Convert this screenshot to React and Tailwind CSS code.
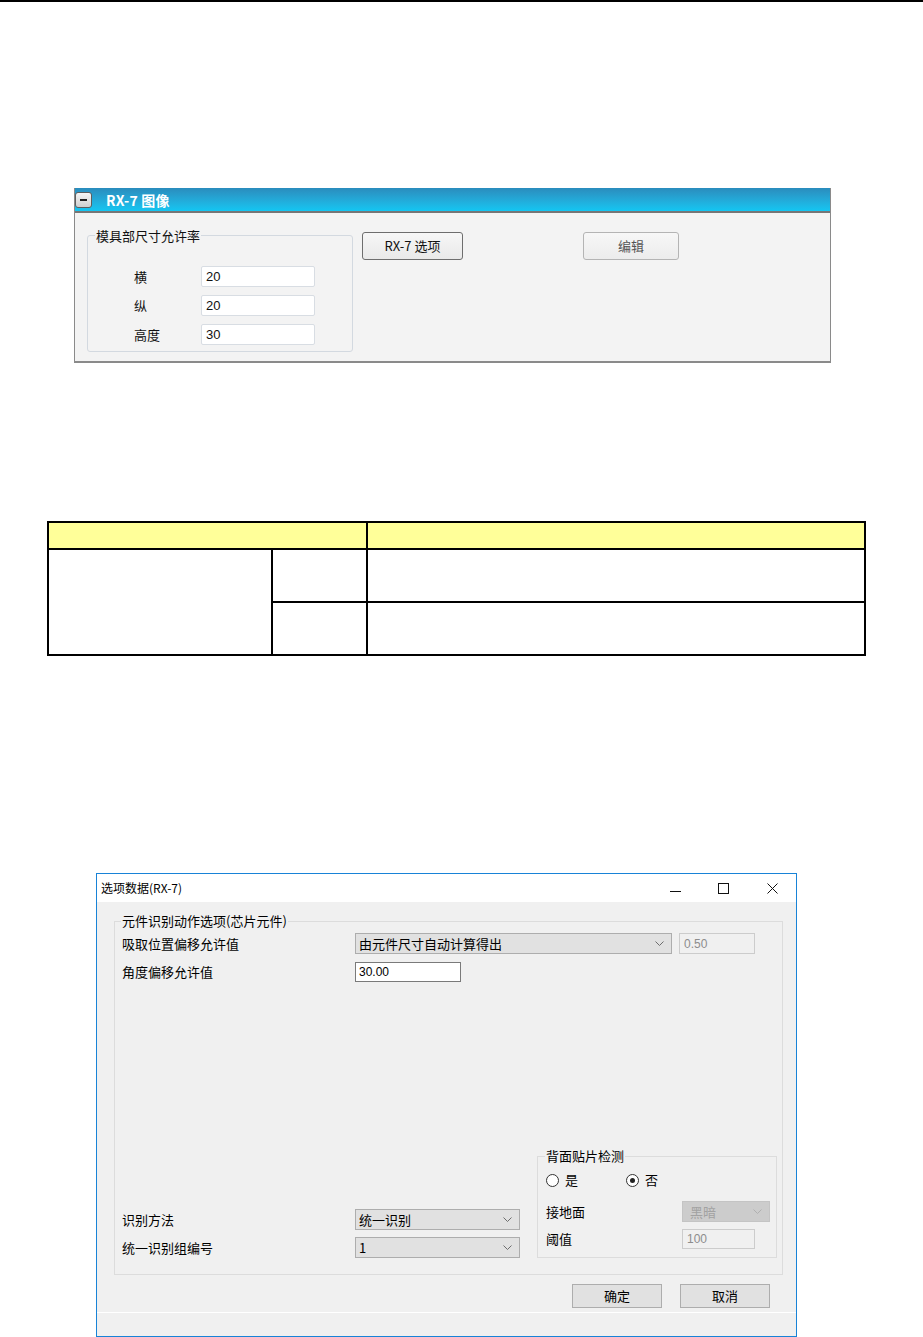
import React from "react";

// Page: a document sheet with two screenshots of RX-7 settings and an empty table.

function Chevron({ color = "#6d6d6d" }) {
  return (
    <svg width="9" height="5" viewBox="0 0 9 5" className="shrink-0">
      <path d="M0.5 0.5 L4.5 4.5 L8.5 0.5" stroke={color} fill="none" strokeWidth="1" />
    </svg>
  );
}

function ImagePanel() {
  return (
    <div className="ml-[74px] mt-[186px] w-[757px] h-[175px] border-x border-b-2 border-[#8a8a8a] bg-[#f3f3f3] flex flex-col">
      <div className="h-[25px] shrink-0 bg-linear-to-b from-[#2a8cbd] to-[#12c6f2] border-b-2 border-[#767676] flex items-center">
        <div className="w-[17px] h-[16px] rounded-[3px] border border-[#5e5e5e] bg-linear-to-b from-[#f6f6f6] to-[#cfcfcf] flex items-center justify-center">
          <div className="w-[7px] h-[2px] bg-[#222]" />
        </div>
        <span className="ml-[14px] text-[14px] leading-[18px] font-bold text-white tracking-[0.2px]">RX-7 图像</span>
      </div>
      <div className="flex items-start pl-[12px] pt-[14px]">
        <fieldset className="w-[266px] h-[125px] border border-[#d3d9e0] rounded-[3px] px-0">
          <legend className="ml-[7px] px-[1px] text-[13px] leading-[17px] text-[#111]">模具部尺寸允许率</legend>
          <div className="mt-[22px] ml-[46px] grid grid-cols-[67px_114px] gap-y-2 items-center">
            {[
              ["横", "20"],
              ["纵", "20"],
              ["高度", "30"],
            ].map(([label, value]) => (
              <React.Fragment key={label}>
                <span className="text-[13px] leading-[21px] text-[#111]">{label}</span>
                <div className="h-[21px] bg-white border border-[#d8dde3] rounded-[2px] pl-[4px] flex items-center text-[13px] font-['Liberation_Sans',sans-serif] text-[#111]">
                  {value}
                </div>
              </React.Fragment>
            ))}
          </div>
        </fieldset>
        <button className="ml-[9px] mt-[5px] w-[101px] h-[28px] rounded-[3px] border border-[#6e6e6e] bg-linear-to-b from-[#f7f7f7] to-[#e9e9e9] text-[13px] text-[#111] flex items-center justify-center">
          RX-7 选项
        </button>
        <button className="ml-[120px] mt-[5px] w-[96px] h-[28px] rounded-[3px] border border-[#b4b4b4] bg-linear-to-b from-[#f7f7f7] to-[#ececec] text-[13px] text-[#555] flex items-center justify-center">
          编辑
        </button>
      </div>
    </div>
  );
}

function EmptyTable() {
  return (
    <table className="ml-[47px] mt-[158px] w-[819px] border-collapse border-2 border-black table-fixed">
      <colgroup>
        <col className="w-[224px]" />
        <col className="w-[95px]" />
        <col />
      </colgroup>
      <thead>
        <tr className="h-[27px] bg-[#ffff99]">
          <th colSpan={2} className="border-2 border-black" />
          <th className="border-2 border-black" />
        </tr>
      </thead>
      <tbody>
        <tr className="h-[53px]">
          <td rowSpan={2} className="border-2 border-black" />
          <td className="border-2 border-black" />
          <td className="border-y-2 border-l border-black" />
        </tr>
        <tr className="h-[53px]">
          <td className="border-2 border-black" />
          <td className="border-y-2 border-l border-black" />
        </tr>
      </tbody>
    </table>
  );
}

function WinSelect({ value, width, disabled }) {
  return (
    <div
      className={
        disabled
          ? "h-[21px] bg-[#cccccc] border border-[#c4c4c4] pl-[7px] pr-[7px] flex items-center justify-between text-[13px] text-[#a2a2a2]"
          : "h-[21px] bg-[#e1e1e1] border border-[#adadad] pl-[3px] pr-[7px] flex items-center justify-between text-[13px] text-black"
      }
      style={{ width }}
    >
      <span className="leading-[19px]">{value}</span>
      <Chevron color={disabled ? "#b0b0b0" : "#6d6d6d"} />
    </div>
  );
}

function Radio({ checked, label }) {
  return (
    <div className="flex items-center">
      <div className="w-[13px] h-[13px] rounded-full border border-[#333] bg-white flex items-center justify-center">
        {checked && <div className="w-[5px] h-[5px] rounded-full bg-[#222]" />}
      </div>
      <span className="ml-[6px] text-[13px] leading-[18px]">{label}</span>
    </div>
  );
}

function OptionDialog() {
  return (
    <div className="ml-[96px] mt-[217px] w-[701px] border border-[#1883d7] bg-[#f0f0f0] flex flex-col text-black">
      <div className="h-[28px] bg-white flex items-center">
        <span className="ml-[4px] text-[12px] leading-[16px]">选项数据(RX-7)</span>
        <div className="ml-auto flex h-full">
          <div className="w-[46px] flex items-center justify-center">
            <svg width="11" height="11" viewBox="0 0 11 11">
              <path d="M0 8.5 H11" stroke="#111" strokeWidth="1" />
            </svg>
          </div>
          <div className="w-[50px] flex items-center justify-center">
            <svg width="11" height="11" viewBox="0 0 11 11">
              <rect x="0.5" y="0.5" width="10" height="10" stroke="#111" fill="none" strokeWidth="1" />
            </svg>
          </div>
          <div className="w-[48px] flex items-center justify-center">
            <svg width="11" height="11" viewBox="0 0 11 11">
              <path d="M0.5 0.5 L10.5 10.5 M10.5 0.5 L0.5 10.5" stroke="#111" strokeWidth="1" fill="none" />
            </svg>
          </div>
        </div>
      </div>

      <div className="h-[434px] flex flex-col">
        <div className="pt-[11px] pl-[17px] pr-[13px]">
          <fieldset className="h-[362px] border border-[#dcdcdc] px-0 flex flex-col">
            <legend className="ml-[6px] px-[1px] text-[13px] leading-[16px]">元件识别动作选项(芯片元件)</legend>
            <div className="flex flex-col h-full">
              <div className="mt-[4px] pl-[7px] flex items-center">
                <span className="w-[233px] text-[13px] leading-[21px]">吸取位置偏移允许值</span>
                <WinSelect value="由元件尺寸自动计算得出" width="317px" />
                <div className="ml-[7px] w-[76px] h-[21px] bg-[#f0f0f0] border border-[#cccccc] pl-[4px] flex items-center text-[12px] font-['Liberation_Sans',sans-serif] text-[#8d8d8d]">
                  0.50
                </div>
              </div>
              <div className="mt-[8px] pl-[7px] flex items-center">
                <span className="w-[233px] text-[13px] leading-[20px]">角度偏移允许值</span>
                <div className="w-[106px] h-[20px] bg-white border border-[#7a7a7a] pl-[3px] flex items-center text-[12px] font-['Liberation_Sans',sans-serif]">
                  30.00
                </div>
              </div>

              <div className="mt-auto pb-[16px] pl-[7px] pr-[4px] flex items-end">
                <div className="flex flex-col gap-[7px]">
                  <div className="flex items-center">
                    <span className="w-[233px] text-[13px] leading-[21px]">识别方法</span>
                    <WinSelect value="统一识别" width="165px" />
                  </div>
                  <div className="flex items-center">
                    <span className="w-[233px] text-[13px] leading-[21px]">统一识别组编号</span>
                    <WinSelect value="1" width="165px" />
                  </div>
                </div>
                <fieldset className="ml-[17px] w-[240px] h-[110px] border border-[#dcdcdc] px-0">
                  <legend className="ml-[7px] px-[1px] text-[13px] leading-[16px]">背面贴片检测</legend>
                  <div className="pl-[8px] mt-[7px] flex items-center">
                    <div className="w-[80px]">
                      <Radio label="是" />
                    </div>
                    <Radio checked label="否" />
                  </div>
                  <div className="pl-[8px] mt-[12px] flex items-center">
                    <span className="w-[136px] text-[13px] leading-[21px]">接地面</span>
                    <WinSelect value="黑暗" width="88px" disabled />
                  </div>
                  <div className="pl-[8px] mt-[7px] flex items-center">
                    <span className="w-[136px] text-[13px] leading-[20px]">阈值</span>
                    <div className="w-[73px] h-[20px] bg-[#f0f0f0] border border-[#cccccc] pl-[4px] flex items-center text-[12px] font-['Liberation_Sans',sans-serif] text-[#8d8d8d]">
                      100
                    </div>
                  </div>
                </fieldset>
              </div>
            </div>
          </fieldset>
        </div>

        <div className="mt-[9px] flex justify-end pr-[26px] gap-[18px]">
          <button className="w-[90px] h-[24px] bg-[#e1e1e1] border border-[#adadad] text-[13px] flex items-center justify-center">
            确定
          </button>
          <button className="w-[90px] h-[24px] bg-[#e1e1e1] border border-[#adadad] text-[13px] flex items-center justify-center">
            取消
          </button>
        </div>

        <div className="mt-[4px] flex-1 border-t border-white" />
      </div>
    </div>
  );
}

export default function App() {
  return (
    <div className="w-[923px] min-h-[1337px] bg-white overflow-hidden font-['Noto_Sans_CJK_SC','Noto_Sans',sans-serif]">
      <div className="h-[2px] bg-black" />
      <ImagePanel />
      <EmptyTable />
      <OptionDialog />
    </div>
  );
}
